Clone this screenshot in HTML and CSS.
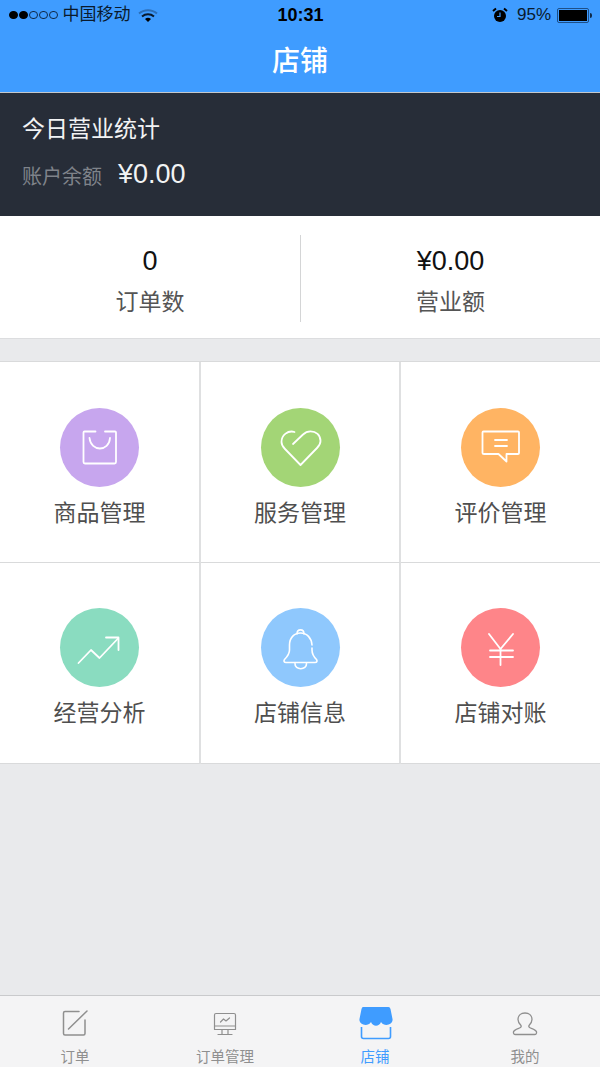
FILE: index.html
```html
<!DOCTYPE html>
<html lang="zh">
<head>
<meta charset="utf-8">
<title>店铺</title>
<link rel="stylesheet" href="styles.css">
</head>
<body>
<div class="page">
  <header class="top">
    <div class="status">
      <div class="status-left">
        <span class="signal"><i class="dot on"></i><i class="dot on"></i><i class="dot"></i><i class="dot"></i><i class="dot"></i></span>
        <span class="carrier">中国移动</span>
        <svg class="wifi" width="20" height="15" viewBox="0 0 20 15"><path d="M1 5.500C6 1 14 1 19 5.500" fill="none" stroke="#2c6fb8" stroke-width="2"/><path d="M4 8.500C7.500 5.500 12.500 5.500 16 8.500" fill="none" stroke="#0a1a2c" stroke-width="2"/><path d="M7 11C9 9.300 11 9.300 13 11L10 14Z" fill="#000"/></svg>
      </div>
      <div class="clock">10:31</div>
      <div class="status-right">
        <svg class="alarm" width="16" height="16" viewBox="0 0 16 16"><circle cx="8" cy="9" r="6" fill="#000"/><path d="M8 5.500V9.500H5" fill="none" stroke="#3f9cff" stroke-width="1.200"/><path d="M1 4L4 1.500M15 4L12 1.500" stroke="#000" stroke-width="2"/></svg>
        <span class="pct">95%</span>
        <span class="battery"><span class="battery-fill"></span></span><span class="battery-tip"></span>
      </div>
    </div>
    <h1 class="title">店铺</h1>
  </header>

  <section class="today">
    <div class="today-title">今日营业统计</div>
    <div class="balance"><span class="balance-label">账户余额</span><span class="balance-value">¥0.00</span></div>
  </section>

  <section class="stats">
    <div class="stat"><div class="stat-value">0</div><div class="stat-label">订单数</div></div>
    <div class="stat"><div class="stat-value">¥0.00</div><div class="stat-label">营业额</div></div>
  </section>

  <section class="grid">
    <div class="cell">
      <div class="circle purple">
        <svg width="79" height="79" viewBox="0 0 79 79" fill="none" stroke="#fff" stroke-width="1.800" stroke-linecap="round" stroke-linejoin="round"><path d="M35.500 23.500H24.500Q23.500 23.500 23.500 24.500V54Q23.500 55.500 25 55.500H54.500Q56 55.500 56 54V24.500Q56 23.500 55 23.500H45"/><path d="M29.500 30C31 44 49 44 50 30"/></svg>
      </div>
      <div class="cell-label">商品管理</div>
    </div>
    <div class="cell">
      <div class="circle green">
        <svg width="79" height="79" viewBox="0 0 79 79" fill="none" stroke="#fff" stroke-width="1.800" stroke-linecap="round" stroke-linejoin="round"><path d="M33.500 24C27 22 20.500 27 20.500 34C20.500 37 22 39 24 41L39.500 57L56 40C58.500 37.500 59.500 35 59.500 33C59.500 27 55 23.300 49.500 23.300C46.500 23.300 44 24.500 42 26.500L32 36"/></svg>
      </div>
      <div class="cell-label">服务管理</div>
    </div>
    <div class="cell">
      <div class="circle orange">
        <svg width="79" height="79" viewBox="0 0 79 79" fill="none" stroke="#fff" stroke-width="1.800" stroke-linecap="round" stroke-linejoin="round"><path d="M22.500 23.500H57Q58 23.500 58 24.500V45Q58 46 57 46H45.500V53.500L37.500 46H23Q21.500 46 21.500 45V24.500Q21.500 23.500 22.500 23.500Z"/><path d="M34 32H46M34 38H46"/></svg>
      </div>
      <div class="cell-label">评价管理</div>
    </div>
    <div class="cell">
      <div class="circle teal">
        <svg width="79" height="79" viewBox="0 0 79 79" fill="none" stroke="#fff" stroke-width="1.800" stroke-linecap="round" stroke-linejoin="round"><path d="M18.500 55L31 42L39.500 50L58 30.500"/><path d="M46 29.500H58.500V42"/></svg>
      </div>
      <div class="cell-label">经营分析</div>
    </div>
    <div class="cell">
      <div class="circle blue">
        <svg width="79" height="79" viewBox="0 0 79 79" fill="none" stroke="#fff" stroke-width="1.600" stroke-linecap="round" stroke-linejoin="round"><path d="M36 26C36 20.500 43 20.500 43 26"/><path d="M51 37C50.500 30 46 25 39.500 25C33 25 28.500 30 28.500 37V42C28.500 46 26 49 23.500 51.500C22.500 53 23 54.500 25 54.500H54C56 54.500 56.500 53 55.500 51.500C53 49 51 46 51 42V40"/><path d="M34 55.500C33.500 62.500 46 62.500 45.500 55.500"/></svg>
      </div>
      <div class="cell-label">店铺信息</div>
    </div>
    <div class="cell">
      <div class="circle red">
        <svg width="79" height="79" viewBox="0 0 79 79" fill="none" stroke="#fff" stroke-width="1.800" stroke-linecap="round" stroke-linejoin="round"><path d="M28 26L39.500 41L52 26"/><path d="M39.500 41V57"/><path d="M29 42.500H52M29 49H52"/></svg>
      </div>
      <div class="cell-label">店铺对账</div>
    </div>
  </section>

  <nav class="tabs">
    <div class="tab">
      <svg class="tab-icon" width="30" height="30" viewBox="0 0 30 30" fill="none" stroke="#8f8f8f" stroke-width="1.500" stroke-linecap="round" stroke-linejoin="round"><path d="M19 3.500H5Q3.500 3.500 3.500 5V25.500Q3.500 27 5 27H23.500Q25 27 25 25.500V12"/><path d="M8.500 21L27 3"/></svg>
      <span class="tab-label">订单</span>
    </div>
    <div class="tab">
      <svg class="tab-icon" width="30" height="30" viewBox="0 0 30 30" fill="none" stroke="#8f8f8f" stroke-width="1.200" stroke-linecap="round" stroke-linejoin="round"><path d="M6 5.500H24Q25.500 5.500 25.500 7V21.500H4.500V7Q4.500 5.500 6 5.500Z"/><path d="M4.500 18H25.500M12 21.500V26.500M18 21.500V26.500M8 26.500H22"/><path d="M10.500 14L13.500 11L16 13L19.500 10"/></svg>
      <span class="tab-label">订单管理</span>
    </div>
    <div class="tab active">
      <svg class="tab-icon" width="34" height="34" viewBox="0 0 34 34"><path d="M4 1H29.500Q31 1 31.500 3L33.500 13C34.500 18 26 22 22 16C20 21 14 21 12 16C8 22 -0.500 18 0.500 13L2.500 3Q3 1 4 1Z" fill="#3f9cff"/><path d="M2.500 21V30.500Q2.500 32.500 4.500 32.500H29.500Q31.500 32.500 31.500 30.500V21" fill="none" stroke="#3f9cff" stroke-width="1.600"/></svg>
      <span class="tab-label">店铺</span>
    </div>
    <div class="tab">
      <svg class="tab-icon" width="30" height="30" viewBox="0 0 30 30" fill="none" stroke="#8f8f8f" stroke-width="1.300" stroke-linejoin="round"><path d="M15 5C11 5 8 7.500 8 11.500C8 14 9.500 16 11 17.500C11.500 18.500 11 19.500 9.500 20C7 21 3.800 22 3.500 24C3.200 25.500 4 26.500 5.500 26.500H24.500C26 26.500 26.800 25.500 26.500 24C26.200 22 23 21 20.500 20C19 19.500 18.500 18.500 19 17.500C20.500 16 22 14 22 11.500C22 7.500 19 5 15 5Z"/></svg>
      <span class="tab-label">我的</span>
    </div>
  </nav>
</div>
</body>
</html>
```
FILE: styles.css
```css
* { box-sizing: border-box; }
html, body { margin: 0; padding: 0; }
body {
  font-family: "Liberation Sans", "Noto Sans CJK SC", sans-serif;
  background: #e9eaec;
  overflow: hidden;
}
.page { width: 600px; height: 1067px; display: flex; flex-direction: column; }

.top { height: 93px; background: #3f9cff; border-bottom: 1px solid #c4c8cc; flex: none; }
.status { height: 30px; display: grid; grid-template-columns: 1fr auto 1fr; align-items: center; padding: 0 8px 0 9px; color: #000; }
.status-left, .status-right { display: flex; align-items: center; }
.status-right { justify-content: flex-end; }
.signal { display: flex; gap: 1.500px; margin-right: 5px; }
.dot { width: 8.500px; height: 8.500px; border-radius: 50%; border: 1px solid #0f2a4a; display: block; }
.dot.on { background: #000; border-color: #000; }
.carrier { font-size: 17px; color: #0a1a2c; line-height: 30px; }
.wifi { margin-left: 7px; }
.clock { font-size: 18px; font-weight: 700; }
.alarm { margin-right: 9px; }
.pct { font-size: 17px; color: #0a1a2c; margin-right: 6px; }
.battery { width: 32px; height: 15px; border: 1px solid #1d4f88; border-radius: 2px; padding: 1px; display: block; }
.battery-fill { display: block; width: 100%; height: 100%; background: #000; }
.battery-tip { width: 2px; height: 5px; background: #0f2a4a; margin-left: 1px; border-radius: 0 2px 2px 0; }
.title { margin: 0; height: 62px; line-height: 63px; text-align: center; color: #fff; font-size: 28px; font-weight: 500; }

.today { height: 123px; background: #272d38; padding: 19px 22px 0; flex: none; }
.today-title { font-size: 23px; line-height: 34px; color: #f2f3f4; }
.balance { display: flex; align-items: center; margin-top: 9px; height: 36px; }
.balance-label { font-size: 20px; color: #7f838a; margin-top: 5px; }
.balance-value { font-size: 27px; color: #f2f3f4; margin-left: 16px; margin-top: 3px; }

.stats { height: 123px; background: #fff; border-bottom: 1px solid #dcdddf; display: flex; padding-top: 19px; padding-bottom: 16px; flex: none; }
.stat { width: 299px; text-align: center; }
.stat:first-child { width: 301px; border-right: 1px solid #d4d5d6; }
.stat-value { font-size: 27px; line-height: 32px; color: #111; margin-top: 10px; }
.stat-label { font-size: 23px; line-height: 34px; color: #555; margin-top: 8px; }

.grid { margin-top: 22px; background: #fff; border-top: 1px solid #d9dadb; display: grid; grid-template-columns: 201px 200px 199px; grid-auto-rows: 201px; flex: none; }
.cell { border-right: 2px solid #dfe0e1; border-bottom: 1px solid #d9dadb; display: flex; flex-direction: column; align-items: center; padding-top: 46px; }
.cell:nth-child(n+4) { padding-top: 45px; }
.cell:nth-child(3n) { border-right: none; }
.circle { width: 79px; height: 79px; border-radius: 50%; flex: none; }
.circle svg { display: block; }
.purple { background: #c7a6ee; }
.green { background: #a3d576; }
.orange { background: #ffb463; }
.teal { background: #8adcc0; }
.blue { background: #8fc8fd; }
.red { background: #fe8589; }
.cell-label { font-size: 23px; line-height: 34px; color: #4f4f4f; margin-top: 9px; }

.tabs { margin-top: auto; height: 72px; background: #f4f4f5; border-top: 1px solid #c9cacc; display: grid; grid-template-columns: repeat(4, 150px); flex: none; overflow: hidden; }
.tab { position: relative; display: flex; flex-direction: column; align-items: center; color: #8f8f8f; }
.tab-icon { position: absolute; top: 12px; left: 60px; }
.tab.active .tab-icon { top: 10px; left: 59px; }
.tab-label { margin-top: 50px; font-size: 14.500px; line-height: 22px; }
.tab.active .tab-label { color: #3f9cff; }
```
